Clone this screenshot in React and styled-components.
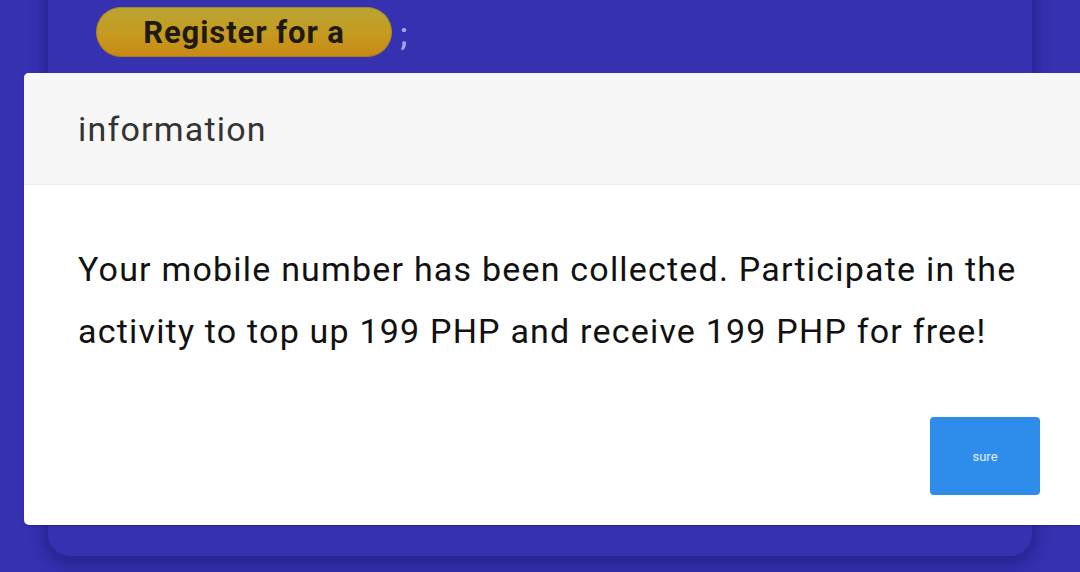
import React from 'react'
import styled, { createGlobalStyle } from 'styled-components'

const GlobalStyle = createGlobalStyle`
  html, body {
    margin: 0;
    padding: 0;
    width: 1080px;
    height: 572px;
    overflow: hidden;
    background: #3531b1;
    font-family: Roboto, "Noto Sans", "Liberation Sans", sans-serif;
  }
`

const Page = styled.div`
  position: relative;
  width: 1080px;
  height: 572px;
  overflow: hidden;
  background: #3531b1;
`

const Card = styled.div`
  position: absolute;
  left: 48px;
  top: -40px;
  width: 984px;
  height: 596px;
  border-radius: 22px;
  background: #3531b1;
  box-shadow: 0 6px 14px 4px rgba(30, 26, 120, 0.55);
`

const TopRow = styled.div`
  position: relative;
  display: flex;
  align-items: flex-start;
  gap: 8px;
  padding: 7px 0 0 96px;
  height: 66px;
  box-sizing: border-box;
`

const Pill = styled.div`
  width: 296px;
  height: 50px;
  border-radius: 25px;
  background: linear-gradient(180deg, #b9a534 0%, #c59a1f 55%, #c88914 100%);
  box-shadow: inset 0 0 0 1px rgba(120, 90, 20, 0.35);
  display: flex;
  align-items: center;
  justify-content: center;
  font-size: 31px;
  font-weight: 700;
  color: #1f1a10;
  letter-spacing: 0.9px;
`

const Semi = styled.span`
  font-size: 32px;
  font-weight: 500;
  line-height: 50px;
  color: #a9a6ec;
  margin-top: 2px;
`

const Dialog = styled.div`
  position: absolute;
  left: 24px;
  top: 73px;
  width: 1080px;
  height: 452px;
  background: #fff;
  border-radius: 5px 0 0 5px;
  box-shadow: 0 1px 2px rgba(0, 0, 0, 0.25);
  display: flex;
  flex-direction: column;
  overflow: hidden;
`

const Header = styled.div`
  flex-shrink: 0;
  height: 112px;
  background: #f7f7f7;
  border-bottom: 1px solid #ececec;
  display: flex;
  align-items: center;
  padding-left: 54px;
  box-sizing: border-box;
  font-size: 34px;
  letter-spacing: 1.2px;
  color: #333;
`

const Body = styled.div`
  flex-shrink: 0;
  padding: 53px 54px 0;
  font-size: 34px;
  letter-spacing: 1.2px;
  line-height: 62px;
  color: #111;
  width: 1056px;
  box-sizing: border-box;
`

const Footer = styled.div`
  flex-shrink: 0;
  display: flex;
  justify-content: flex-end;
  width: 1016px;
  padding-top: 55px;
`

const Button = styled.button`
  width: 110px;
  height: 78px;
  border: none;
  border-radius: 4px;
  background: #2e8deb;
  color: #e4efff;
  font-family: Roboto, "Noto Sans", sans-serif;
  font-size: 13px;
  padding: 0;
`

export default function App() {
  return (
    <Page>
      <GlobalStyle />
      <Card />
      <TopRow>
        <Pill>Register for a</Pill>
        <Semi>;</Semi>
      </TopRow>
      <Dialog>
        <Header>information</Header>
        <Body>
          Your mobile number has been collected. Participate in the activity to top up 199 PHP and receive 199 PHP for free!
        </Body>
        <Footer>
          <Button>sure</Button>
        </Footer>
      </Dialog>
    </Page>
  )
}
